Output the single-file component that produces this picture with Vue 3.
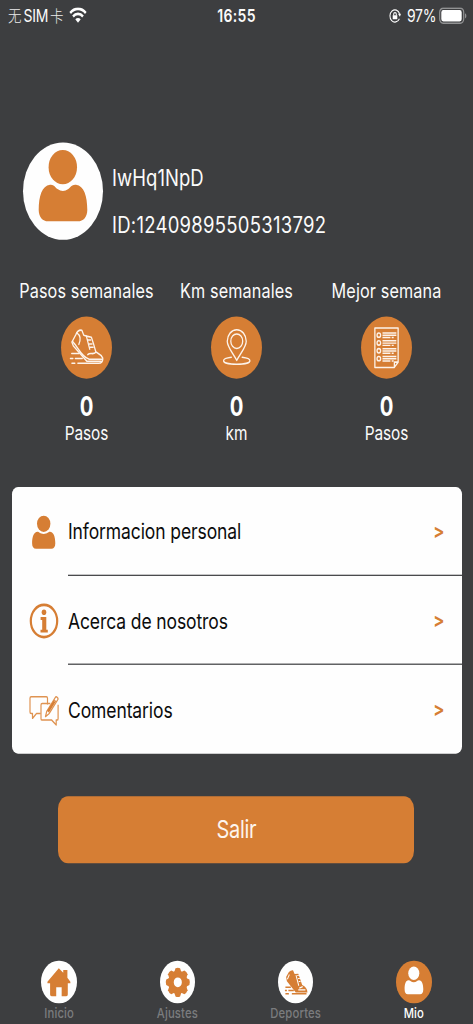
<script setup>
const stats = [
  { title: 'Pasos semanales', value: 0, unit: 'Pasos', icon: 'shoe' },
  { title: 'Km semanales', value: 0, unit: 'km', icon: 'pin' },
  { title: 'Mejor semana', value: 0, unit: 'Pasos', icon: 'list' },
]
const rows = [
  { label: 'Informacion personal', icon: 'person' },
  { label: 'Acerca de nosotros', icon: 'info' },
  { label: 'Comentarios', icon: 'chat' },
]
const tabs = [
  { label: 'Inicio', icon: 'home' },
  { label: 'Ajustes', icon: 'gear' },
  { label: 'Deportes', icon: 'shoe' },
  { label: 'Mio', icon: 'person', active: true },
]
const lines = [0, 1, 2, 3]
const teeth = [0, 45, 90, 135, 180, 225, 270, 315]
</script>

<template>
  <div class="viewport">
    <main class="screen">
      <header class="status">
        <div class="carrier">
          <span class="cjk">无</span><span class="sim">SIM</span><span class="cjk">卡</span>
          <svg class="wifi" viewBox="0 0 18 13">
            <path d="M1.2 4.6a11 11 0 0 1 15.6 0" />
            <path d="M4 7.5a7 7 0 0 1 10 0" />
            <path class="fill" d="M9 12.6 6.3 9.9a3.8 3.8 0 0 1 5.4 0z" />
          </svg>
        </div>
        <div class="time">16:55</div>
        <div class="power">
          <svg class="lock" viewBox="0 0 12 12">
            <path d="M10.6 4.3A5 5 0 1 0 10.4 8.4" />
            <path class="fill" d="M9 4.3h3L10.9 6.7zM3.7 5.6h4.6v3.2H3.7z" />
            <path d="M4.7 5.8V4.6a1.3 1.3 0 0 1 2.6 0v1.2" />
          </svg>
          <span class="pct">97%</span>
          <svg class="battery" viewBox="0 0 28 14">
            <rect class="shell" x=".7" y=".7" width="24" height="12.4" rx="3.4" />
            <rect class="fill" x="2.3" y="2.2" width="20.4" height="9.4" rx="2" />
            <path class="cap" d="M26 4.8c1.8.7 1.8 3.6 0 4.3z" />
          </svg>
        </div>
      </header>

      <section class="profile">
        <div class="avatar">
          <svg viewBox="0 0 80 80">
            <ellipse cx="39.8" cy="20.3" rx="14.2" ry="14.1" />
            <path d="M27 34.8C31 34.3 32 37 34.5 38.3a11 11 0 0 0 10.8 0C47.5 37 49 34.3 53 34.8 61 35.8 64.3 44 64.3 55.5c0 6-4.3 9.3-9.3 9.3H25c-5 0-9.3-3.3-9.3-9.3C15.7 44 19 35.8 27 34.8z" />
          </svg>
        </div>
        <div class="ident">
          <div class="name">IwHq1NpD</div>
          <div class="uid">ID:12409895505313792</div>
        </div>
      </section>

      <section class="stats">
        <div v-for="s in stats" :key="s.title" class="stat">
          <div class="stat-title">{{ s.title }}</div>
          <div class="disc">
            <svg v-if="s.icon === 'shoe'" viewBox="0 0 52 52">
              <path d="M17 38.7H38c3 0 4.3-1.5 4.2-4.3-1.4-2.8-4.6-3.8-7-5L32.6 22 30.7 17.2 25.6 16.2 23 15.5 21 11.3c-2.6-.3-5 1.5-6 3.7l-4 6.2 1.5 3.2L26 37h14.5" />
              <path d="M11.6 20.5C18 26 20 33 28.5 35.4H42M27 31.5c2.5-2 5.5.5 8.2-1.9M25.6 16.2 29 27M30 19.5h-2.8M31.4 22.7h-2.9M32.5 25.5h-3M16 13.5c4 2 4 6 2 9.5" />
              <path d="M10.8 30.6h7.5M9.5 34.8h2.5M14.5 34.8h7M11 38.7h3" />
            </svg>
            <svg v-else-if="s.icon === 'pin'" viewBox="0 0 52 52">
              <path d="M26 36.3C21 29 16.4 25 16.4 20.5a9.6 9.6 0 0 1 19.2 0C35.6 25 31 29 26 36.3z" />
              <circle cx="26" cy="20.4" r="6" />
              <path d="M20.5 33.7c-5.2.5-7.8 1.7-7.8 2.9 0 1.7 5.5 3 13.3 3s13.3-1.3 13.3-3c0-1.2-2.6-2.4-7.8-2.9" />
            </svg>
            <svg v-else viewBox="0 0 52 52">
              <path d="M14 9.5H37.5V37.8L33.5 42.2H14zM37.5 37.8h-3.8v4.4" />
              <g v-for="n in lines" :key="n" :transform="`translate(0 ${n * 6.5})`">
                <circle cx="18" cy="15.4" r="1.8" />
                <path class="rule" d="M21.7 13.6h14M21.7 15.5h14M21.7 17.4h8M31 17.4h2" />
              </g>
            </svg>
          </div>
          <div class="value">{{ s.value }}</div>
          <div class="unit">{{ s.unit }}</div>
        </div>
      </section>

      <section class="card">
        <div v-for="r in rows" :key="r.label" class="row">
          <div class="row-icon">
            <svg v-if="r.icon === 'person'" class="solid" viewBox="0 0 30 30">
              <circle cx="14.7" cy="8.2" r="6.7" />
              <path d="M8.5 14.7c1.5 0 2.5 1.8 6.2 1.8s4.7-1.8 6.2-1.8c3.6 0 5.4 4.2 5.4 9.5 0 3-1.4 4.5-4 4.5H7.1c-2.6 0-4-1.5-4-4.5 0-5.3 1.8-9.5 5.4-9.5z" />
            </svg>
            <svg v-else-if="r.icon === 'info'" class="solid" viewBox="0 0 30 30">
              <circle class="ring" cx="15" cy="15" r="13.2" />
              <circle cx="15" cy="7.8" r="2.3" />
              <path d="M11.6 11.8h5.7v10.4h1.5v2.3h-7.3v-2.3h1.7v-8h-1.6z" />
            </svg>
            <svg v-else class="outline" viewBox="0 0 30 30">
              <path d="M18.5 9.5V4.5c0-.8-.4-1.2-1.2-1.2H2.2C1.4 3.3 1 3.7 1 4.5v11.3c0 .8.4 1.2 1.2 1.2h1.3v4l4-4h4.2" />
              <path d="M21.3 8.8h-8.1c-.8 0-1.2.4-1.2 1.2v11.2c0 .8.4 1.2 1.2 1.2h9.5l4.5 4v-4h.7c.8 0 1.2-.4 1.2-1.2V9.8" />
              <path d="M16.5 19.5l1.2-4.2L26.2 3.9c1-1.4 3.5.2 2.6 1.7L20 17.2zM24.8 5.7l2.5 2" />
              <path class="core" d="M19 15.5l6.5-8.5" />
            </svg>
          </div>
          <div class="row-main">
            <span>{{ r.label }}</span>
            <span class="more">&gt;</span>
          </div>
        </div>
      </section>

      <button class="logout">Salir</button>

      <nav class="tabs">
        <div v-for="t in tabs" :key="t.label" class="tab" :class="{ active: t.active }">
          <div class="tab-disc">
            <svg v-if="t.icon === 'home'" viewBox="0 0 36 36">
              <path d="M18 6.3 22.5 10V7.7h4.2v6.5l3 3.3v1.2h-2.6V28q0 1.5-1.5 1.5h-4.7v-7.5h-5.5v7.5h-4.7Q9.2 29.5 9.2 28v-9.3H6.5v-1.2z" />
            </svg>
            <svg v-else-if="t.icon === 'gear'" viewBox="0 0 36 36">
              <circle class="hub" cx="18" cy="18" r="6.9" />
              <path v-for="a in teeth" :key="a" :transform="`rotate(${a} 18 18)`" d="M14 10.5 15.7 6.3Q18 5.3 20.3 6.3L22 10.5z" />
            </svg>
            <svg v-else-if="t.icon === 'shoe'" viewBox="0 0 36 36">
              <path d="M8.2 13.5 11 9.5Q13 7.8 15.2 8L16.8 11 20.5 10.8 24.5 20.3Q29.5 22 29.8 26.5H18L9 17z" />
              <path class="lace" d="M18.2 12 21 20.8M19.5 12.3h1.5M20.3 14.8h1.8M21 17.3h1.8M9.5 15.5l2-4M21.5 22.8l3.5-1.2" />
              <path class="lace" d="M20.5 24.2h7.2" />
              <path class="streak" d="M14 27.5h14.8M7.5 27.5h3.5M7.5 22h5.5M7 24.7h2M10.5 24.7h5.5" />
            </svg>
            <svg v-else viewBox="0 0 36 36">
              <circle cx="18" cy="10.5" r="5.6" />
              <path d="M12.7 16.2c1.8 0 2.6 1.7 5.3 1.7s3.5-1.7 5.3-1.7c3 0 4.3 3.5 4.3 7.5 0 2.8-1.1 4.1-3.3 4.1H12c-2.2 0-3.3-1.3-3.3-4.1 0-4 1-7.5 4-7.5z" />
            </svg>
          </div>
          <div class="tab-label">{{ t.label }}</div>
        </div>
      </nav>
    </main>
  </div>
</template>

<style>
body { background: #3d3e40; }
</style>

<style scoped>
.viewport { width: 473px; height: 1024px; overflow: hidden; background: #3d3e40; }
.screen {
  width: 473px;
  height: 841px;
  display: flex;
  flex-direction: column;
  transform: scaleY(1.2176);
  transform-origin: 0 0;
  font-family: Inter, "Noto Sans CJK SC", sans-serif;
  color: #fbfbfb;
  white-space: nowrap;
}
svg { display: block; fill: none; }
.status { height: 25px; display: grid; grid-template-columns: 1fr auto 1fr; align-items: center; font-size: 14px; line-height: 25px; }
.carrier { display: flex; align-items: center; padding-left: 8px; }
.cjk { font-family: "Noto Sans CJK SC", sans-serif; font-size: 13.5px; font-weight: 300; color: #ececec; }
.sim { margin: 0 2px; letter-spacing: -.3px; }
.wifi { width: 18px; height: 13px; margin-left: 5px; stroke: #fff; stroke-width: 2.3; }
.wifi .fill, .power .fill { fill: #fff; stroke: none; }
.time { font-size: 14px; font-weight: 600; letter-spacing: .35px; }
.power { display: flex; align-items: center; justify-content: flex-end; padding-right: 6px; }
.lock { width: 12px; height: 12px; stroke: #fff; stroke-width: 1; margin-right: 6px; }
.pct { letter-spacing: -.4px; }
.battery { width: 28px; height: 14px; margin-left: 3px; }
.shell { stroke: #919293; stroke-width: 1.2; }
.cap { fill: #919293; }
.profile { margin: 91.6px 0 0 23px; height: 80px; display: flex; }
.avatar { width: 80px; height: 80px; border-radius: 50%; background: #fefefe; }
.avatar svg { fill: #d67e34; }
.ident { margin-left: 9px; padding-top: 17.4px; font-size: 18.5px; line-height: 25px; }
.name { letter-spacing: .05px; }
.uid { margin-top: 12.7px; letter-spacing: .26px; }
.stats { margin: 32.4px 11.5px 0; display: grid; grid-template-columns: repeat(3, 150px); }
.stat { display: flex; flex-direction: column; align-items: center; }
.stat-title { font-size: 16.2px; line-height: 20px; letter-spacing: .13px; }
.disc { width: 51.5px; height: 51.5px; margin: 10.6px 0 12.2px; border-radius: 50%; background: #d67e34; }
.disc svg { stroke: #fdf3ea; stroke-width: 1.3; stroke-linejoin: round; stroke-linecap: round; }
.disc .rule { stroke-linecap: butt; stroke-width: 1.2; }
.value { font-size: 22.5px; font-weight: 700; line-height: 21px; color: #fff; transform: scaleX(.9); }
.unit { font-size: 15.4px; line-height: 18px; margin-top: 3px; letter-spacing: -.05px; }
.card { margin: 34.5px 11.5px 0; height: 219.3px; border-radius: 6px; background: #fefefe; color: #0c0c0c; display: flex; flex-direction: column; flex: none; }
.row { flex: 1; display: flex; align-items: center; padding-left: 17px; }
.row-icon { width: 30px; height: 30px; margin: 2px 9.5px 0 0; }
.row-main { flex: 1; height: 100%; box-sizing: border-box; display: flex; align-items: center; justify-content: space-between; padding: 2.3px 17px 0 0; border-bottom: 1px solid #3d3e40; font-size: 17.5px; letter-spacing: -.1px; }
.row:last-child .row-main { border-bottom-color: transparent; }
.solid { fill: #d67e34; }
.ring { fill: none; stroke: #d67e34; stroke-width: 2.2; }
.outline { stroke: #df9351; stroke-width: 1.2; stroke-linejoin: round; }
.outline .core { stroke: #d67e34; stroke-width: 2.2; }
.more { color: #d67e34; font-weight: 700; font-size: 16.5px; letter-spacing: 0; margin-top: -2px; }
.logout { flex: none; margin: 35.4px 0 0 58.4px; width: 356px; height: 55px; padding: 0; border: 0; border-radius: 10px; background: #d67e34; color: #fdf5ee; font: 20px/55px Inter, sans-serif; letter-spacing: -.3px; }
.tabs { margin-top: auto; height: 52.5px; display: grid; grid-template-columns: repeat(4, 1fr); }
.tab { display: flex; flex-direction: column; align-items: center; color: #7b7c7e; }
.tab-disc { width: 35.6px; height: 35.6px; border-radius: 50%; background: #fefefe; }
.tab-disc svg { fill: #d67e34; }
.tab-disc .hub { fill: none; stroke: #d67e34; stroke-width: 5.6; }
.tab-disc .lace { fill: none; stroke: #fefefe; stroke-width: 1; }
.tab-disc .streak { fill: none; stroke: #d67e34; stroke-width: 1.3; }
.tab-label { margin-top: 1.4px; font-size: 11.3px; line-height: 14px; font-weight: 500; letter-spacing: .15px; }
.active { color: #fefefe; }
.active .tab-disc { background: #d67e34; }
.active .tab-disc svg { fill: #fefefe; }
</style>
